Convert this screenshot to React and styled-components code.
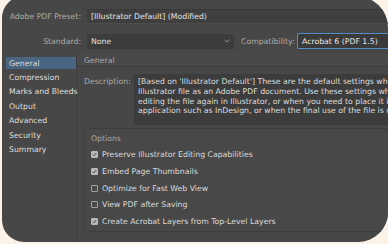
import React from "react";
import styled, { createGlobalStyle } from "styled-components";

const Global = createGlobalStyle`
  html, body { margin: 0; padding: 0; background: #fcf2e7; overflow: hidden; }
  body { width: 388px; height: 244px; }
`;

const Panel = styled.div`
  margin: -4px 0 0 2px;
  width: 386px;
  height: 246px;
  background: #474747;
  border-radius: 22px 32px 30px 22px;
  overflow: hidden;
  display: flex;
  flex-direction: column;
  font-family: "DejaVu Sans", Verdana, sans-serif;
  font-size: 7.75px;
  color: #d6d6d6;
  box-sizing: border-box;
`;

const Top = styled.div`
  padding-top: 13px;
  display: flex;
  flex-direction: column;
  gap: 9.5px;
`;

const Row = styled.div`
  display: flex;
  align-items: center;
  height: 15px;
`;

const Label = styled.div`
  width: ${(p) => p.$w || 79}px;
  flex: none;
  text-align: ${(p) => p.$align || "right"};
  color: #ababab;
  white-space: nowrap;
  margin-right: ${(p) => p.$mr ?? 6}px;
`;

const Field = styled.div`
  flex: 1;
  height: 15px;
  display: flex;
  align-items: center;
  padding-left: 4px;
  background: #3f3f3f;
  border-top: 1px solid #383838;
  border-bottom: 1px solid #4c4c4c;
  box-sizing: border-box;
  white-space: nowrap;
  overflow: hidden;
  color: #e2e2e2;
`;

const Select = styled.div`
  width: 147px;
  flex: none;
  height: 15px;
  display: flex;
  align-items: center;
  justify-content: space-between;
  padding: 0 4px 0 4px;
  background: #3c3c3c;
  border-radius: 1px;
  box-sizing: border-box;
  color: #e2e2e2;
  margin-right: 7px;
`;

const Chevron = styled.svg`
  width: 6px;
  height: 4px;
`;

const CompatField = styled.div`
  flex: 1;
  height: 15.5px;
  display: flex;
  align-items: center;
  padding-left: 4px;
  background: #3a3a3a;
  border: 1px solid #4f8cc9;
  border-right: none;
  border-radius: 2px 0 0 2px;
  box-sizing: border-box;
  color: #e6e6e6;
  white-space: nowrap;
`;

const Main = styled.div`
  flex: 1;
  display: flex;
  margin-top: 5.5px;
  min-height: 0;
`;

const Sidebar = styled.div`
  width: 75px;
  flex: none;
  padding: 2.7px 0 0 4px;
  border-right: 1px solid #3c3c3c;
  box-sizing: border-box;
  display: flex;
  flex-direction: column;
  gap: 1.6px;
`;

const NavItem = styled.div`
  height: 12.8px;
  display: flex;
  align-items: center;
  padding-left: 3px;
  white-space: nowrap;
  color: #dedede;
  background: ${(p) => (p.$active ? "#4a6582" : "transparent")};
`;

const Content = styled.div`
  flex: 1;
  display: flex;
  flex-direction: column;
  min-width: 0;
`;

const Header = styled.div`
  height: 13px;
  display: flex;
  align-items: center;
  padding-left: 7px;
  color: #a9a9a9;
  background: #494949;
  border-bottom: 1px solid #3d3d3d;
  box-sizing: border-box;
`;

const DescRow = styled.div`
  display: flex;
  margin-top: 7px;
  padding-left: 7px;
`;

const DescLabel = styled.div`
  width: 50px;
  flex: none;
  color: #a9a9a9;
  padding-top: 3px;
  line-height: 9.8px;
`;

const DescBox = styled.div`
  flex: 1;
  height: 51px;
  background: #3c3c3c;
  padding: 3px 0 0 4px;
  box-sizing: border-box;
  line-height: 9.8px;
  white-space: nowrap;
  overflow: hidden;
  color: #dcdcdc;
`;

const Group = styled.div`
  margin: 3px -30px 0 7px;
  height: 104px;
  border: 1px solid #3e3e3e;
  background: #484848;
  box-sizing: border-box;
  padding: 5px 0 0 6px;
  display: flex;
  flex-direction: column;
`;

const GroupTitle = styled.div`
  height: 10px;
  line-height: 10px;
  color: #a9a9a9;
  margin-bottom: 2.5px;
`;

const CheckRow = styled.div`
  height: 16.7px;
  display: flex;
  align-items: center;
  gap: 4px;
  white-space: nowrap;
  color: #dadada;
`;

const Box = styled.span`
  width: 7px;
  height: 7px;
  flex: none;
  box-sizing: border-box;
  border-radius: 1px;
  border: 1px solid ${(p) => (p.$on ? "#b9b9b9" : "#a0a0a0")};
  background: ${(p) => (p.$on ? "#b9b9b9" : "transparent")};
  display: flex;
  align-items: center;
  justify-content: center;
`;

const Check = () => (
  <svg width="5" height="5" viewBox="0 0 5 5">
    <path d="M0.8 2.6 L2 3.8 L4.3 1" fill="none" stroke="#474747" strokeWidth="1" />
  </svg>
);

const nav = ["General", "Compression", "Marks and Bleeds", "Output", "Advanced", "Security", "Summary"];
const options = [
  ["Preserve Illustrator Editing Capabilities", true],
  ["Embed Page Thumbnails", true],
  ["Optimize for Fast Web View", false],
  ["View PDF after Saving", false],
  ["Create Acrobat Layers from Top-Level Layers", true],
];

export default function App() {
  return (
    <>
      <Global />
      <Panel>
        <Top>
          <Row>
            <Label>Adobe PDF Preset:</Label>
            <Field>[Illustrator Default] (Modified)</Field>
          </Row>
          <Row>
            <Label>Standard:</Label>
            <Select>
              <span>None</span>
              <Chevron viewBox="0 0 6 4">
                <path d="M0.6 0.8 L3 3 L5.4 0.8" fill="none" stroke="#9a9a9a" strokeWidth="0.9" />
              </Chevron>
            </Select>
            <Label $w={52} $align="left" $mr={4}>Compatibility:</Label>
            <CompatField>Acrobat 6 (PDF 1.5)</CompatField>
          </Row>
        </Top>
        <Main>
          <Sidebar>
            {nav.map((n, i) => (
              <NavItem key={n} $active={i === 0}>{n}</NavItem>
            ))}
          </Sidebar>
          <Content>
            <Header>General</Header>
            <DescRow>
              <DescLabel>Description:</DescLabel>
              <DescBox>
                [Based on 'Illustrator Default'] These are the default settings when saving an
                <br />
                Illustrator file as an Adobe PDF document. Use these settings when you plan on
                <br />
                editing the file again in Illustrator, or when you need to place it in a layout
                <br />
                application such as InDesign, or when the final use of the file is unknown.
              </DescBox>
            </DescRow>
            <Group>
              <GroupTitle>Options</GroupTitle>
              {options.map(([t, on]) => (
                <CheckRow key={t}>
                  <Box $on={on}>{on && <Check />}</Box>
                  {t}
                </CheckRow>
              ))}
            </Group>
          </Content>
        </Main>
      </Panel>
    </>
  );
}
